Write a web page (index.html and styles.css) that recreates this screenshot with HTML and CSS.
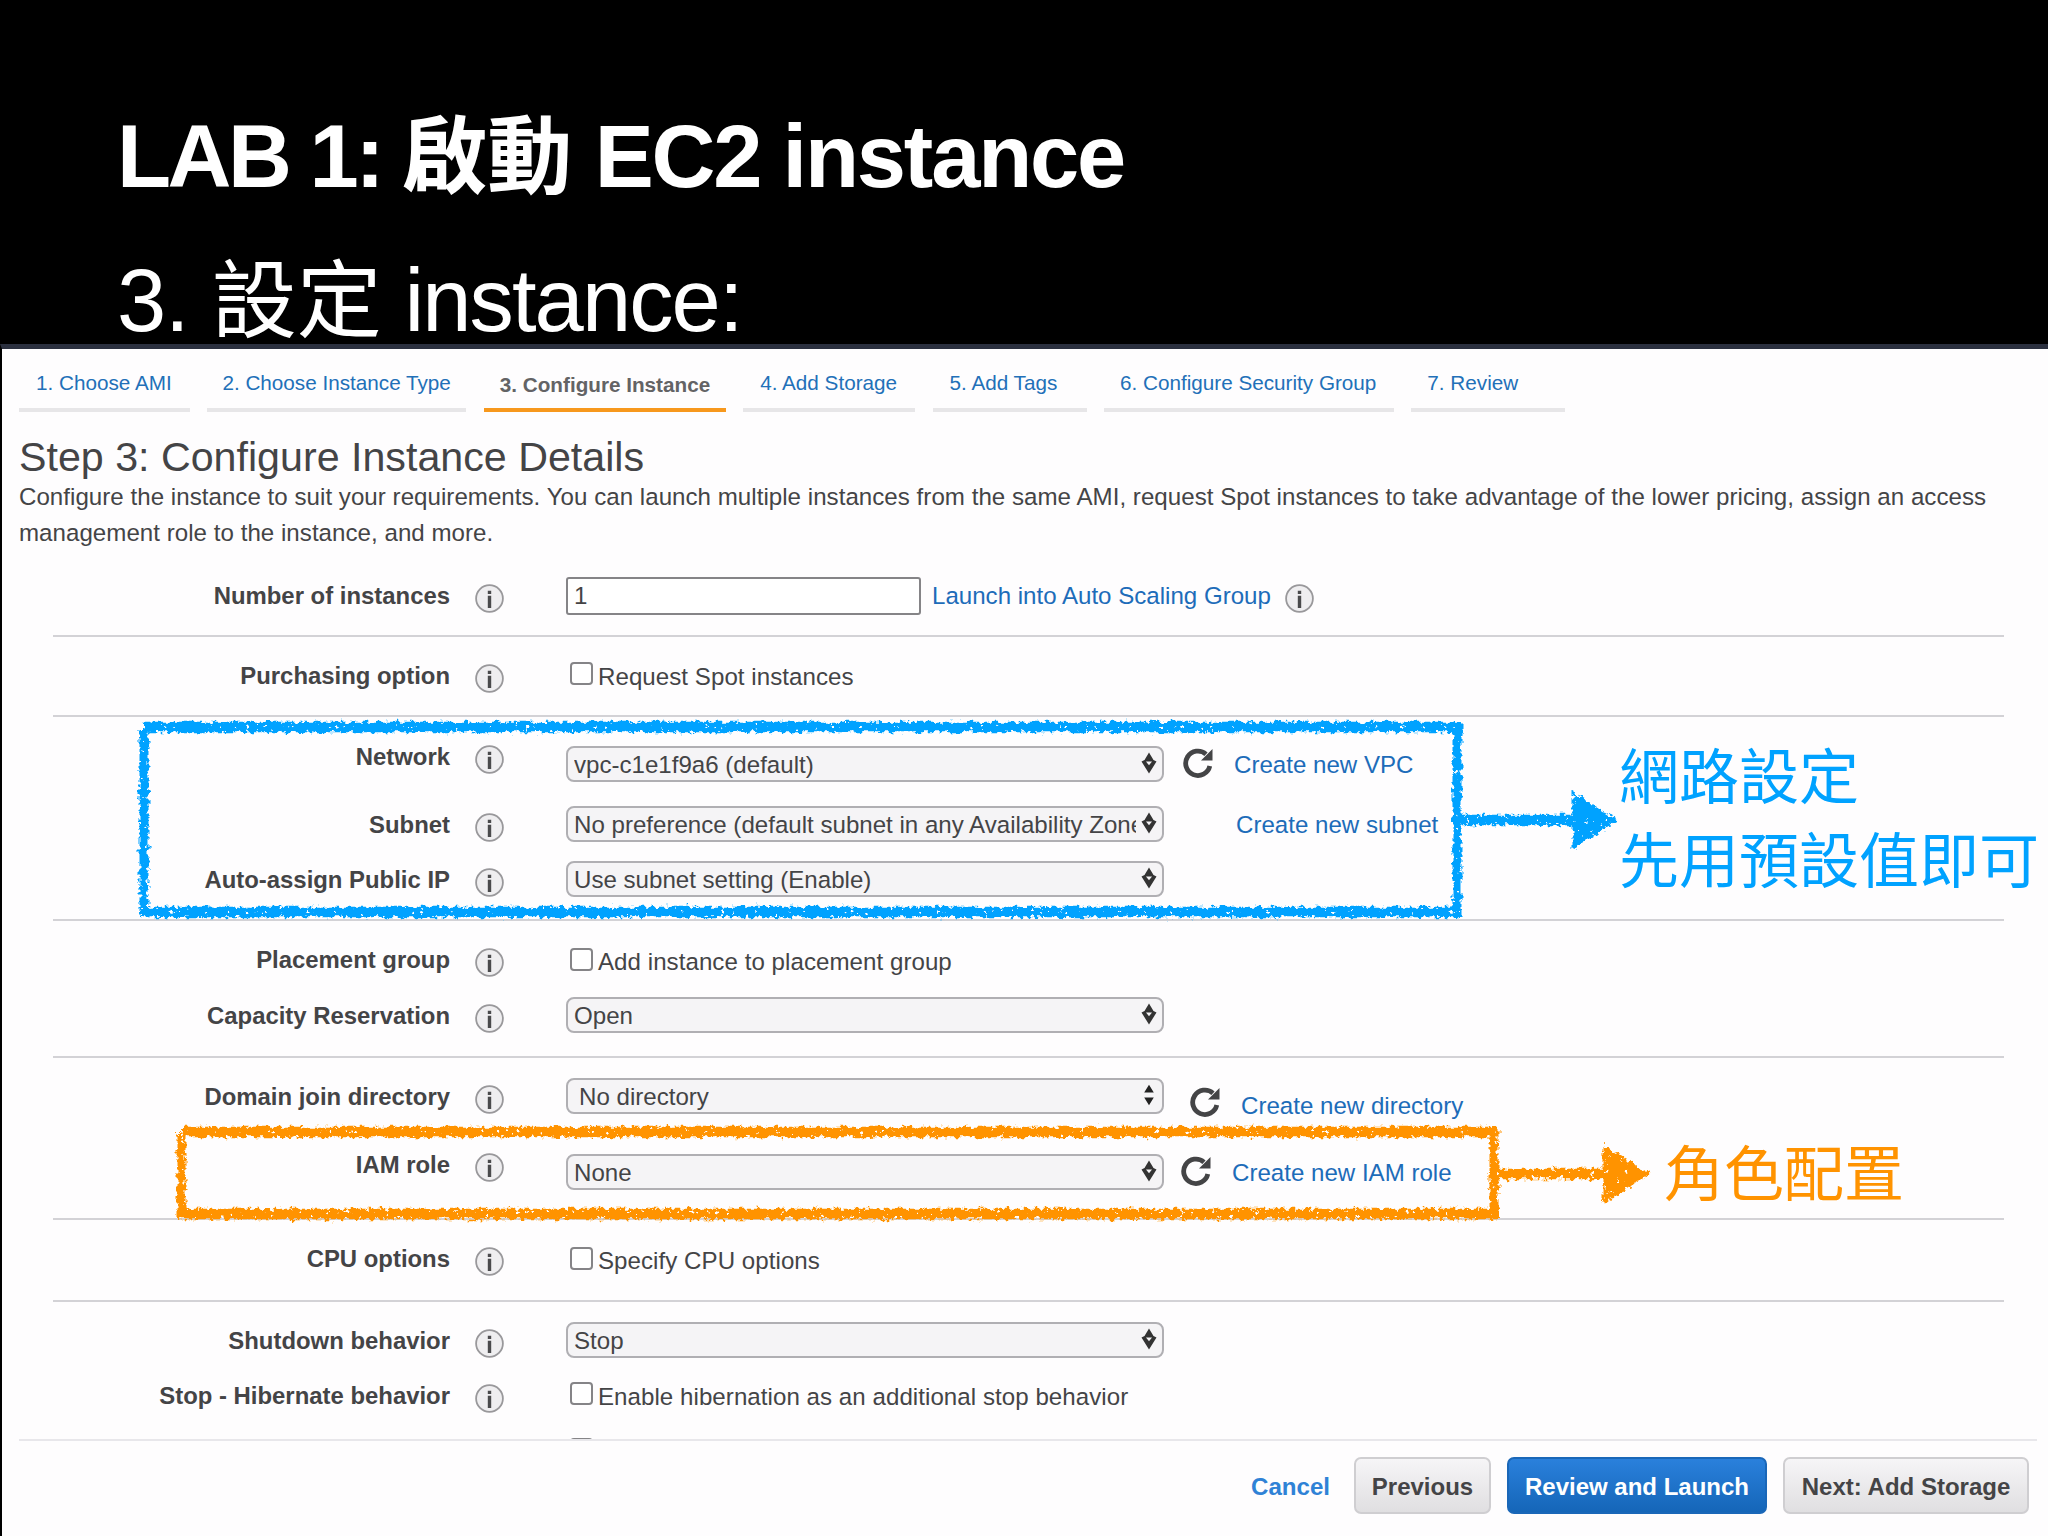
FILE: index.html
```
<!DOCTYPE html>
<html lang="zh-Hant">
<head>
    <meta charset="UTF-8">
    <meta name="viewport" content="width=device-width, initial-scale=1.0">
    <title>LAB 1: 啟動 EC2 instance</title>
    <link rel="stylesheet" href="styles.css">
</head>
<body>

    <!-- shared icons -->
    <svg class="sprite" width="0" height="0">
        <symbol id="info" viewBox="0 0 29 29">
            <circle cx="14.5" cy="14.5" r="13.4" fill="#efeef0" stroke="#99989b" stroke-width="1.8"/>
            <path d="M14.5 6.8v3.2M14.5 11.8v12.2" stroke="#4a4a4c" stroke-width="3.4"/>
        </symbol>
        <symbol id="refresh" viewBox="0 0 30 30">
            <path d="M23 6.2A12.2 12.2 0 1 0 26.8 18" fill="none" stroke="#444446" stroke-width="4.8"/>
            <path d="M29.5 1V12.5H18z" fill="#444446"/>
        </symbol>
        <symbol id="arrows" viewBox="0 0 16 22">
            <path d="M8 .5L12.5 8 15.5 9.5 8 21.5.5 9.5 3.5 8z" fill="#333"/>
            <path d="M5 9.6H11L8 13.2z" fill="#f5f4f6"/>
        </symbol>
        <symbol id="arrows-split" viewBox="0 0 16 22">
            <path d="M8 .8L12.8 8.6H3.2zM8 21.2L3.2 13.4h9.6z" fill="#222"/>
        </symbol>
    </svg>

    <header class="slide-title">
        <h1><span class="lab">LAB 1: </span><span class="cjk">啟動</span> EC2 instance</h1>
        <h2><span class="num">3. </span><span class="cjk">設定</span> instance:</h2>
    </header>

    <main class="console">
        <nav class="tabs">
            <a class="tab">1. Choose AMI</a>
            <a class="tab">2. Choose Instance Type</a>
            <a class="tab active">3. Configure Instance</a>
            <a class="tab">4. Add Storage</a>
            <a class="tab">5. Add Tags</a>
            <a class="tab">6. Configure Security Group</a>
            <a class="tab">7. Review</a>
        </nav>

        <h3>Step 3: Configure Instance Details</h3>
        <p class="intro">Configure the instance to suit your requirements. You can launch multiple instances from the same AMI, request Spot instances to take advantage of the lower pricing, assign an access<br>management role to the instance, and more.</p>

        <div class="form">
            <section>
                <div class="row">
                    <label>Number of instances</label>
                    <svg class="info"><use href="#info"/></svg>
                    <input class="text" type="text" value="1">
                    <a class="link near">Launch into Auto Scaling Group</a>
                    <svg class="info inline"><use href="#info"/></svg>
                </div>
            </section>

            <section>
                <div class="row">
                    <label>Purchasing option</label>
                    <svg class="info"><use href="#info"/></svg>
                    <span class="check high"></span><span class="check-text">Request Spot instances</span>
                </div>
            </section>

            <section class="network">
                <div class="row">
                    <label>Network</label>
                    <svg class="info"><use href="#info"/></svg>
                    <div class="field low">
                        <div class="select"><span>vpc-c1e1f9a6 (default)</span><svg><use href="#arrows"/></svg></div>
                        <svg class="refresh"><use href="#refresh"/></svg>
                        <a class="link">Create new VPC</a>
                    </div>
                </div>
                <div class="row subnet">
                    <label>Subnet</label>
                    <svg class="info"><use href="#info"/></svg>
                    <div class="field">
                        <div class="select"><span>No preference (default subnet in any Availability Zone)</span><svg><use href="#arrows"/></svg></div>
                        <a class="link far">Create new subnet</a>
                    </div>
                </div>
                <div class="row public-ip">
                    <label>Auto-assign Public IP</label>
                    <svg class="info"><use href="#info"/></svg>
                    <div class="field">
                        <div class="select"><span>Use subnet setting (Enable)</span><svg><use href="#arrows"/></svg></div>
                    </div>
                </div>
            </section>

            <section class="placement">
                <div class="row">
                    <label>Placement group</label>
                    <svg class="info"><use href="#info"/></svg>
                    <span class="check"></span><span class="check-text low">Add instance to placement group</span>
                </div>
                <div class="row capacity">
                    <label>Capacity Reservation</label>
                    <svg class="info"><use href="#info"/></svg>
                    <div class="field">
                        <div class="select"><span>Open</span><svg><use href="#arrows"/></svg></div>
                    </div>
                </div>
            </section>

            <section class="iam">
                <div class="row domain">
                    <label>Domain join directory</label>
                    <svg class="info"><use href="#info"/></svg>
                    <div class="field">
                        <div class="select"><span>No directory</span><svg><use href="#arrows-split"/></svg></div>
                        <svg class="refresh"><use href="#refresh"/></svg>
                        <a class="link">Create new directory</a>
                    </div>
                </div>
                <div class="row role">
                    <label>IAM role</label>
                    <svg class="info"><use href="#info"/></svg>
                    <div class="field low">
                        <div class="select"><span>None</span><svg><use href="#arrows"/></svg></div>
                        <svg class="refresh"><use href="#refresh"/></svg>
                        <a class="link">Create new IAM role</a>
                    </div>
                </div>
            </section>

            <section class="cpu">
                <div class="row">
                    <label>CPU options</label>
                    <svg class="info"><use href="#info"/></svg>
                    <span class="check"></span><span class="check-text low">Specify CPU options</span>
                </div>
            </section>

            <section class="shutdown">
                <div class="row">
                    <label>Shutdown behavior</label>
                    <svg class="info"><use href="#info"/></svg>
                    <div class="field">
                        <div class="select"><span>Stop</span><svg><use href="#arrows"/></svg></div>
                    </div>
                </div>
                <div class="row hibernate">
                    <label>Stop - Hibernate behavior</label>
                    <svg class="info"><use href="#info"/></svg>
                    <span class="check high"></span><span class="check-text">Enable hibernation as an additional stop behavior</span>
                </div>
                <!-- next row is scrolled off, only its checkbox edge shows -->
                <div class="row cut">
                    <span class="check"></span>
                </div>
            </section>
        </div>

        <footer class="actions">
            <a class="cancel">Cancel</a>
            <button class="btn previous">Previous</button>
            <button class="btn primary">Review and Launch</button>
            <button class="btn next">Next: Add Storage</button>
        </footer>
    </main>

    <!-- hand drawn callouts over the console -->
    <svg class="callouts" viewBox="0 0 2048 1536">
        <filter id="crayon" filterUnits="userSpaceOnUse" x="0" y="0" width="2048" height="1536">
            <feTurbulence type="fractalNoise" baseFrequency="0.2" numOctaves="3" seed="4" result="noise"/>
            <feDisplacementMap in="SourceGraphic" in2="noise" scale="9" xChannelSelector="R" yChannelSelector="G" result="rough"/>
            <feColorMatrix in="noise" type="matrix" values="0 0 0 0 0  0 0 0 0 0  0 0 0 0 0  0 0 18 0 -4.1" result="grain"/>
            <feComposite in="rough" in2="grain" operator="in"/>
        </filter>
        <g filter="url(#crayon)">
            <g class="blue">
                <path class="h" d="M143 727H1461M142 912H1461"/>
                <path class="v" d="M144 730V915M1457 723V916"/>
                <path class="h arrow" d="M1459 820H1580"/>
                <path class="head" d="M1575 796L1613 820 1575 845z"/>
            </g>
            <g class="orange">
                <path class="h" d="M183 1132H1498M178 1214H1498"/>
                <path class="v" d="M181 1134V1217M1494 1129V1217"/>
                <path class="h arrow" d="M1497 1174H1610"/>
                <path class="head" d="M1606 1149L1645 1174 1606 1199z"/>
            </g>
        </g>
    </svg>
    <p class="note note-network">網路設定<br>先用預設值即可</p>
    <p class="note note-role">角色配置</p>

</body>
</html>
```
FILE: styles.css
```
* {
    box-sizing: border-box;
}

body {
    position: relative;
    width: 2048px;
    height: 1536px;
    margin: 0;
    overflow: hidden;
    background-color: #000;
    color: #444446;
    font-family: "Liberation Sans", "Noto Sans CJK TC", sans-serif;
    font-size: 24.1px;
}

h1, h2, h3, p {
    margin: 0;
}

.sprite {
    display: block;
}

/* Slide heading */
.slide-title {
    height: 344px;
    padding: 85px 0 0 117px;
    color: #fff;
}

.slide-title h1 {
    font-size: 88.5px;
    line-height: 144px;
    letter-spacing: -2.2px;
    white-space: pre;
}

.slide-title h1 .lab {
    letter-spacing: -3.5px;
}

.slide-title h2 {
    margin-top: 28px;
    font-size: 88.5px;
    font-weight: 400;
    line-height: 88px;
    letter-spacing: -1.9px;
    white-space: pre;
}

.slide-title h2 .num {
    letter-spacing: -1.2px;
}

.slide-title .cjk {
    font-family: "Noto Sans CJK TC", sans-serif;
    font-size: 85px;
    line-height: 0;
    letter-spacing: 0;
}

/* Console panel */
.console {
    height: 1192px;
    padding: 0 11px 0 17px;
    border-top: 5px solid #2b303f;
    border-left: 2px solid #000;
    background-color: #fefdfe;
}

.tabs {
    display: flex;
    gap: 17.4px;
    height: 63px;
}

.tab {
    width: 154px;
    padding: 22px 0 0 17px;
    border-bottom: 4px solid #e7e6e8;
    color: #2270b8;
    font-size: 20.7px;
    line-height: 24px;
    white-space: nowrap;
}

.tab:nth-child(1) { width: 171px; }
.tab:nth-child(2) { width: 259px; padding-left: 15px; }
.tab:nth-child(3) { width: 242px; padding-left: 16px; }
.tab:nth-child(4) { width: 172px; }
.tab:nth-child(6) { width: 290px; padding-left: 16px; }
.tab:nth-child(7) { padding-left: 16px; }

.tab.active {
    padding-top: 24px;
    border-color: #f7981d;
    color: #636365;
    font-weight: 700;
}

h3 {
    margin-top: 23px;
    font-size: 41.2px;
    font-weight: 400;
    line-height: 45px;
}

.intro {
    margin-top: -1px;
    line-height: 36px;
    white-space: nowrap;
    letter-spacing: 0.035px;
}

/* Form */
.form {
    height: 883px;
    margin-top: 5px;
    padding: 0 33px 0 34px;
    overflow: hidden;
}

section {
    border-bottom: 2px solid #d3d2d6;
}

.row {
    display: flex;
    align-items: center;
    height: 78px;
    white-space: nowrap;
}

section:first-child .row {
    height: 79px;
}

label {
    width: 397px;
    font-size: 23.9px;
    font-weight: 700;
    text-align: right;
}

.info {
    width: 29px;
    height: 29px;
    margin: 5px 62px 0 25px;
}

.info.inline {
    margin: 5px 0 0 14px;
}

.text {
    width: 355px;
    height: 38px;
    padding: 0 6px;
    border: 2px solid #858487;
    border-radius: 3px;
    background-color: #fff;
    color: #444446;
    font: inherit;
}

.link {
    margin-top: 2px;
    color: #1d6cb9;
    font-size: 24.1px;
}

.link.near {
    margin-top: 0;
    margin-left: 11px;
}

.check {
    width: 23px;
    height: 23px;
    margin: -2px 5px 0 4px;
    border: 2px solid #858487;
    border-radius: 4px;
    background-color: #fff;
}

.check.high {
    margin-top: -6px;
}

.check-text {
    padding-top: 1px;
    letter-spacing: 0.05px;
}

.check-text.low {
    margin-top: 3px;
}

.field {
    display: flex;
    align-items: center;
    margin-top: -2px;
}

.field.low {
    margin-top: 14px;
}

.select {
    display: flex;
    align-items: center;
    justify-content: space-between;
    width: 598px;
    height: 36px;
    padding: 0 5px 0 6px;
    border: 2px solid #b0afb3;
    border-radius: 8px;
    background-color: #f5f4f6;
}

.select span {
    width: 562px;
    padding-top: 1px;
    overflow: hidden;
    line-height: 32px;
}

.select svg {
    width: 16px;
    height: 22px;
    margin-top: -3px;
}

.refresh {
    width: 30px;
    height: 30px;
    margin: -3px 21px 0 19px;
}

.link.far {
    margin-left: 72px;
}

.network .row {
    height: 80px;
}

.network .subnet {
    height: 56px;
}

.network .public-ip {
    height: 54px;
}

.network {
    padding-bottom: 12px;
}

.placement .capacity {
    height: 34px;
}

.placement {
    padding-bottom: 23px;
}

.iam {
    padding-bottom: 24px;
}

.iam .role {
    height: 58px;
}

.domain .select span {
    padding-left: 5px;
}

.domain .refresh {
    margin: 12px 21px 0 26px;
}

.domain .link {
    margin-top: 19px;
}

.role .refresh {
    margin-left: 17px;
}

.cpu {
    padding-bottom: 2px;
}

.shutdown {
    border: 0;
}

.shutdown .hibernate {
    height: 32px;
}

.shutdown .cut {
    align-items: flex-start;
    height: 40px;
    padding: 28px 0 0 513px;
}

/* Footer buttons */
.actions {
    display: flex;
    align-items: center;
    justify-content: flex-end;
    gap: 16px;
    height: 92px;
    padding: 0 8px 1px 0;
    border-top: 2px solid #e8e7eb;
}

.cancel {
    margin: 2px 8px 0 0;
    color: #2f82d6;
    font-weight: 700;
}

.btn {
    height: 57px;
    padding: 2px 0 0;
    border: 2px solid #cfced1;
    border-radius: 7px;
    background: linear-gradient(#f6f5f7, #e0dfe1);
    color: #444446;
    font-family: inherit;
    font-size: 24px;
    font-weight: 700;
}

.btn.previous {
    width: 137px;
}

.btn.primary {
    width: 260px;
    border-color: #1a67b8;
    background: linear-gradient(#2a80dc, #1566b8);
    color: #fff;
}

.btn.next {
    width: 246px;
}

/* Callouts */
.callouts {
    position: absolute;
    top: 0;
    left: 0;
    width: 2048px;
    height: 1536px;
}

.callouts path {
    fill: none;
}

.callouts .h {
    stroke-width: 10.5;
}

.callouts .v {
    stroke-width: 9;
}

.callouts .blue {
    stroke: #00a2ff;
}

.callouts .orange {
    stroke: #ff9300;
}

.callouts .head {
    stroke-width: 5;
}

.callouts .blue .head {
    fill: #00a2ff;
}

.callouts .orange .head {
    fill: #ff9300;
}

.note {
    position: absolute;
    font-family: "Noto Sans CJK TC", sans-serif;
    font-size: 60px;
    line-height: 84px;
    white-space: nowrap;
}

.note-network {
    top: 731px;
    left: 1619px;
    color: #00a2ff;
}

.note-role {
    top: 1128px;
    left: 1664px;
    color: #ff9300;
}
```
